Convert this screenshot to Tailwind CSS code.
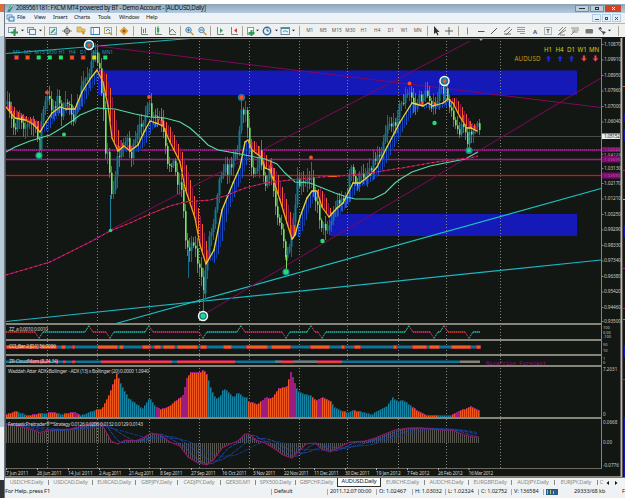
<!DOCTYPE html>
<html lang="en">
<head>
    <meta charset="UTF-8">
    <meta name="viewport" content="width=device-width, initial-scale=1.0">
    <title>FXCM MT4 - AUDUSD,Daily</title>
    <script src="https://cdn.jsdelivr.net/npm/@tailwindcss/browser@4"></script>
</head>
<body class="h-[502px] w-[625px] overflow-hidden bg-white pt-1 font-['Noto_Sans',sans-serif] text-[6px] leading-none text-[#222]">
    <div class="flex h-[494px]">
        <!-- edge of the docked panel on the left -->
        <aside class="flex w-[5px] shrink-0 flex-col border-r border-[#6d7883] bg-[#b9cbd9]">
            <div class="h-2 bg-[#e06a35]"></div>
            <div class="h-6 bg-[#eceff2]"></div>
            <div class="flex-1"></div>
            <div class="h-[53px] bg-[#eef1f4]"></div>
            <div class="h-[18px] bg-[#333]"></div>
        </aside>

        <div class="flex w-[620px] flex-col">
            <!-- title bar -->
            <header class="flex h-[9px] items-center bg-linear-to-b from-[#8fa6b2] to-[#b3cbe4] whitespace-nowrap">
                <svg class="ml-px h-2 w-2" viewBox="0 0 8 8"><path d="M1 7 L4 1 L7 2 L4 7Z" fill="#3e8e7c"/><path d="M3 4L6 1" stroke="#e8c23a"/></svg>
                <span class="ml-0.5 text-[6.2px] tracking-[-0.34px] text-[#111]">2089561181: FXCM MT4 powered by BT - Demo Account - [AUDUSD,Daily]</span>
                <div class="mr-1 ml-auto flex h-[7px] gap-px">
                    <i class="grid w-3.5 place-items-center border border-[#7c8c9c] bg-[#bccddc]"><b class="h-px w-1.5 bg-[#333]"></b></i>
                    <i class="grid w-3.5 place-items-center border border-[#7c8c9c] bg-[#bccddc]"><b class="h-[3px] w-1 border border-[#333]"></b></i>
                    <i class="grid w-4 place-items-center bg-[#cf4426]"><svg class="h-[5px] w-[5px]" viewBox="0 0 5 5"><path d="M1 1L4 4M4 1L1 4" stroke="#fff"/></svg></i>
                </div>
            </header>

            <!-- menu -->
            <nav class="flex h-2.5 items-center bg-[#edf2f6] text-[5.7px] tracking-[-0.25px] whitespace-nowrap">
                <svg class="ml-px h-2 w-[9px]" viewBox="0 0 9 8"><rect x="1" y="1" width="5" height="4" fill="#fff" stroke="#5c93c4"/><rect x="3" y="3" width="5" height="4" fill="#d6e8f5" stroke="#3e75a8"/></svg>
                <span class="ml-0.5 w-[17px]">File</span>
                <span class="w-[19px]">View</span>
                <span class="w-[21px]">Insert</span>
                <span class="w-[24px]">Charts</span>
                <span class="w-[21px]">Tools</span>
                <span class="w-[27px]">Window</span>
                <span>Help</span>
                <div class="mr-1 ml-auto flex h-2 gap-px text-center text-[6px] text-[#345]">
                    <i class="grid w-[9px] place-items-center border border-[#b4cce0] bg-[#e6eff7]"><b class="mt-0.5 h-px w-1 bg-[#456]"></b></i>
                    <i class="grid w-[9px] place-items-center border border-[#b4cce0] bg-[#e6eff7]"><b class="h-[3px] w-[3px] border border-[#456]"></b></i>
                    <i class="grid w-[9px] place-items-center border border-[#b4cce0] bg-[#e6eff7]"><svg class="h-[5px] w-[5px]" viewBox="0 0 5 5"><path d="M1 1L4 4M4 1L1 4" stroke="#456"/></svg></i>
                </div>
            </nav>

            <!-- toolbar, filled by the script -->
            <div id="toolbar" class="flex h-3.5 items-center border-t border-[#b9b6a8] bg-[#eff1f1] pl-px text-[#555]"></div>

            <!-- chart -->
            <svg id="chart" class="block h-[440px] w-[620px] bg-[#131713]" viewBox="5 37 620 440" font-family="Noto Sans, sans-serif"></svg>

            <!-- chart tabs -->
            <div class="flex h-2.5 items-center border-t border-[#777] bg-[#f0f3f4] text-center text-[5.6px] tracking-[-0.2px] whitespace-nowrap text-[#888]">
                <span class="w-[43px]">USDCHF,Daily</span>
                <span class="w-[44px] border-l border-[#888]">USDCAD,Daily</span>
                <span class="w-[43px] border-l border-[#888]">EURCAD,Daily</span>
                <span class="w-[42px] border-l border-[#888]">GBPJPY,Daily</span>
                <span class="w-[43px] border-l border-[#888]">CADJPY,Daily</span>
                <span class="w-[35px] border-l border-[#888]">GER30,M1</span>
                <span class="w-[40px] border-l border-[#888]">SPX500,Daily</span>
                <span class="w-[42px] border-l border-[#888]">GBPCHF,Daily</span>
                <span class="grid h-[9px] w-[44px] place-items-center border border-t-0 border-[#333] bg-white text-[#111]">AUDUSD,Daily</span>
                <span class="w-[43px]">EURCHF,Daily</span>
                <span class="w-[44px] border-l border-[#888]">AUDCHF,Daily</span>
                <span class="w-[43px] border-l border-[#888]">EURGBP,Daily</span>
                <span class="w-[43px] border-l border-[#888]">AUDJPY,Daily</span>
                <span class="w-[43px] border-l border-[#888]">EURJPY,Daily</span>
                <span class="w-[8px] border-l border-[#888]">C</span>
                <svg class="h-1.5 w-3.5" viewBox="0 0 14 6"><path d="M4 1V5L1.500 3ZM10 1V5L12.500 3Z" fill="#111"/></svg>
            </div>

            <!-- status bar -->
            <footer class="flex h-[11px] items-center bg-[#eef2f4] pb-px text-[5.6px] tracking-[-0.1px] whitespace-nowrap">
                <span class="w-[266px] text-[5.8px] tracking-[-0.2px]">For Help, press F1</span>
                <span class="w-[56px] border-l border-[#aaa] pl-0.5">Default</span>
                <span class="w-[49px] border-l border-[#aaa] pl-0.5 tracking-[-0.2px]">2011.12.07 00:00</span>
                <span class="w-[36px] border-l border-[#aaa] pl-0.5">O: 1.02467</span>
                <span class="w-[33px] border-l border-[#aaa] pl-0.5">H: 1.03032</span>
                <span class="w-[33px] border-l border-[#aaa] pl-0.5">L: 1.02324</span>
                <span class="w-[33px] border-l border-[#aaa] pl-0.5">C: 1.02752</span>
                <span class="w-[32px] border-l border-[#aaa] pl-0.5">V: 136584</span>
                <span class="flex w-[31px] items-center border-l border-[#aaa] pl-0.5"><svg class="h-1.5 w-3" viewBox="0 0 12 6"><rect width="12" height="6" fill="#2c5c86"/><path d="M1.500 1V5M4.500 1V5M7.500 2V5" stroke="#b8c860"/></svg></span>
                <span class="w-[48px]">29333/68 kb</span>
                <span>F</span>
            </footer>
        </div>
    </div>

    <script>
        // ---------- toolbar ----------
        const doc = '<rect x="2.500" y="1.500" width="6" height="7" fill="#fff" stroke="#8a98a4"/>';
        const axes = '<path d="M2.500 1V8.500H9" stroke="#7a8a7a" fill="none"/>';
        const lens = '<circle cx="4.500" cy="4" r="2.700" fill="#cfe6f6" stroke="#4787b4"/><path d="M6.500 6L9.500 9" stroke="#c09a3c" stroke-width="1.500"/>';
        const icons = {
            newchart: '<rect x=".5" y="1.500" width="7" height="5" fill="#e9f2f8" stroke="#7f98ab"/><path d="M6.500 3V10M3 6.500H10" stroke="#2f9a4a" stroke-width="2.200"/>',
            profiles: '<rect x="1.500" y="1.500" width="6" height="5" fill="#dceaf5" stroke="#7f98ab"/><rect x="3.500" y="3.500" width="6" height="5" fill="#eef5fa" stroke="#6a8196"/>',
            market: '<rect x="1.500" y="1.500" width="7" height="7" fill="#e4f0f8" stroke="#6fa4c8"/><path d="M3 7L7 3" stroke="#2f9a4a" stroke-width="1.500"/><path d="M6 7H8" stroke="#d98c24"/>',
            target: '<circle cx="5" cy="5" r="2.500" fill="none" stroke="#555"/><path d="M5 0V10M0 5H10" stroke="#555" stroke-width=".7"/>',
            folder: '<path d="M1 1H5L6 3H9V6H1Z" fill="#e9c264" stroke="#b98d2d" stroke-width=".6"/><path d="M5 4L9 7L7 9Z" fill="#dc8f1f"/>',
            terminal: '<rect x="1" y="1.500" width="8.500" height="7" fill="#f4fafd" stroke="#3f7fb0"/><path d="M3.500 2V8" stroke="#7fb0d2"/>',
            tester: '<rect x="1.500" y="1.500" width="7" height="6" fill="#e8f0f5" stroke="#c2a658"/><path d="M3 5L5 3L7 5" stroke="#4787b4" fill="none"/><path d="M6 6L9 9" stroke="#c09a3c" stroke-width="1.500"/>',
            order: '<path d="M5 .5L9.500 5L5 9.500L.5 5Z" fill="#e6a23c"/><circle cx="5" cy="5" r="1.500" fill="#8d5b20"/>',
            bars: axes + '<path d="M4.500 3V7M6.500 2V7" stroke="#4c9c6a"/>',
            candles: axes + '<path d="M5 0V8" stroke="#3f9f62"/><rect x="4" y="2" width="2.200" height="4" fill="#3f9f62"/>',
            line: axes + '<path d="M3 6L5 3L9 7" stroke="#4c9c6a" fill="none"/>',
            zoomin: lens + '<path d="M3 4H6M4.500 2.500V5.500" stroke="#245d88" stroke-width=".8"/>',
            zoomout: lens + '<path d="M3 4H6" stroke="#245d88" stroke-width=".8"/>',
            scroll: axes + '<path d="M5 2L8 4.500L5 7Z" fill="#3f9f62"/>',
            shift: axes + '<path d="M8 2L5 4.500L8 7Z" fill="#c84040"/>',
            indic: doc + '<path d="M6.500 4V10M3.500 7H9.500" stroke="#26a24b" stroke-width="2"/>',
            clock: '<circle cx="5" cy="5" r="3.700" fill="#eaf4fb" stroke="#2e6da4" stroke-width="1.400"/><path d="M5 2.500V5H7" stroke="#333" fill="none" stroke-width=".8"/>',
            template: '<rect x="1" y="1.500" width="8.500" height="7" fill="#eef5f9" stroke="#6b8ba2"/><path d="M1 2.500H9.500" stroke="#4787b4"/><path d="M3 6L5 4.500L8 6" stroke="#57a063" fill="none"/>',
            cursor: '<path d="M3 0V8L5 6.500L6.500 9.500L7.500 9L6.200 6H8.500Z" fill="#333"/>',
            cross: '<path d="M5 1V9M1 5H9" stroke="#555" stroke-width=".9"/>',
            vline: '<path d="M5.500 1.500V8.500" stroke="#a08b4c"/>',
            hline: '<path d="M2 5.500H8.500" stroke="#555"/>',
            trend: '<path d="M2 8L8 2" stroke="#555"/>',
            channel: '<path d="M1 6L7 1M3 9L9 3M1 8H8" stroke="#666" stroke-width=".9"/>',
            fibo: '<path d="M1 1.500H9M1 3.500H9M1 5.500H9M4 7.500H9" stroke="#8a8560" stroke-width=".8"/>',
            gann: '<path d="M1 9L9 1M1 9L9 4M2 5L6 1M3 9H8" stroke="#777" stroke-width=".9"/>',
            fan: '<path d="M1 2H9M2 4H9M2 6H8M1 9L5 5" stroke="#7c7a62" stroke-width=".8"/>',
            rect: '<rect x="1.500" y="3" width="7.500" height="4.500" rx="1" fill="#777"/>',
            text: '<text x="5" y="7.500" font-size="6" font-weight="bold" text-anchor="middle" fill="#555">A</text>',
            label: '<rect x="1.500" y="1.500" width="7" height="7" fill="none" stroke="#777" stroke-dasharray="1"/><text x="5" y="7.300" font-size="6" font-weight="bold" text-anchor="middle" fill="#555">T</text>',
            arrows: '<path d="M1 2L4 1L5 4ZM5 5L9 6L6 9Z" fill="#444"/><path d="M2 3L7 8" stroke="#666"/>'
        };
        // [what, cell width]; "|" is a separator, "v" a drop-down arrow
        const tools = [
            ['newchart', 14], ['v', 4], ['profiles', 14], ['v', 4], ['|', 4], ['market', 14], ['target', 14], ['folder', 14],
            ['terminal', 13], ['tester', 13], ['|', 4], ['order', 12], ['|', 7], ['bars', 14], ['candles', 14], ['line', 13], ['|', 4],
            ['zoomin', 13], ['zoomout', 13], ['|', 5], ['scroll', 14], ['shift', 13], ['|', 4], ['indic', 11], ['v', 5],
            ['clock', 14], ['v', 4], ['template', 13], ['v', 4], ['|', 8],
            ['M1', 13.5], ['M5', 13.5], ['M15', 13.5], ['M30', 13.5], ['H1', 13.5], ['H4', 13.5], ['D1', 13.5], ['W1', 13.5], ['MN', 13.5],
            ['|', 5], ['cursor', 13], ['cross', 13], ['|', 5], ['vline', 13.5], ['hline', 13.5], ['trend', 13.5], ['channel', 13.5],
            ['fibo', 13.5], ['text', 13.5], ['label', 13.5], ['gann', 13.5], ['fan', 13.5], ['rect', 13.5], ['arrows', 12], ['v', 4], ['|', 13]
        ];
        document.getElementById('toolbar').innerHTML = tools.map(([t, w]) => {
            let inner = `<span class="text-[4.8px]">${t}</span>`;
            if (t === '|') inner = '<i class="h-2.5 w-px bg-[#a9a794]"></i>';
            else if (t === 'v') inner = '<svg class="h-[3px] w-[3px]" viewBox="0 0 4 4"><path d="M0 1H4L2 3Z" fill="#111"/></svg>';
            else if (icons[t]) inner = `<svg class="h-2.5 w-2.5" viewBox="0 0 10 10">${icons[t]}</svg>`;
            return `<div class="grid h-full shrink-0 place-items-center" style="width:${w}px">${inner}</div>`;
        }).join('');

        // ---------- chart ----------
        let out = '';
        const line = (x1, y1, x2, y2, c, extra = '') => out += `<line x1="${x1}" y1="${y1}" x2="${x2}" y2="${y2}" stroke="${c}" ${extra}/>`;
        const rect = (x, y, w, h, c) => out += `<rect x="${x}" y="${y}" width="${w}" height="${h}" fill="${c}"/>`;
        const poly = (pts, c, extra = '') => out += `<polyline points="${pts.join(' ')}" fill="none" stroke="${c}" ${extra}/>`;
        const text = (x, y, s, c = '#c8c8c8', size = 5, extra = '') => out += `<text x="${x}" y="${y}" fill="${c}" font-size="${size}" ${extra}>${s}</text>`;
        const crisp = 'shape-rendering="crispEdges"';

        // "x,y x,y ..." -> [[x, y], ...]
        const parse = s => s.trim().split(/\s+/).map(p => p.split(',').map(Number));
        const at = (pts, x) => {
            if (x <= pts[0][0]) return pts[0][1];
            for (let i = 1; i < pts.length; i++) {
                const [a, ya] = pts[i - 1], [b, yb] = pts[i];
                if (x <= b) return ya + (yb - ya) * (x - a) / (b - a);
            }
            return pts[pts.length - 1][1];
        };
        let seed = 7;
        const rnd = () => (seed = (seed * 16807) % 2147483647) / 2147483647;

        // zones
        rect(98, 70, 479, 25, '#1419b8');
        rect(330, 214, 247, 22, '#1419b8');
        line(98, 70.5, 577, 70.5, '#0a0c60', 'stroke-dasharray="1 1"');

        // period separators
        [47.5, 97.5, 149.5, 199.5, 249.5, 299.5, 347.5, 398.5, 446.5, 500.5].forEach(x =>
            line(x, 38, x, 468, '#85857c', 'stroke-dasharray="1 2"'));

        // price levels
        line(6, 136.5, 601, 136.5, '#4a4c4a');
        line(6, 150, 601, 150, '#7c0c6c', 'stroke-width="2"');
        line(6, 150, 601, 150, '#b02a98', 'stroke-width="1" stroke-dasharray="1 1"');
        line(6, 159.5, 601, 159.5, '#a01c88', 'stroke-width="1.300"');
        line(6, 175.5, 601, 175.5, '#481414', 'stroke-width="2"');
        line(6, 175.5, 601, 175.5, '#9a2070');

        // trend lines
        line(6, 53.5, 190, 38.5, '#1cb4b4', 'stroke-width="1.200"');
        line(6, 321.5, 601, 260, '#1cb4c0', 'stroke-width="1.200"');
        line(116, 323.5, 601, 188.5, '#1cc0c0', 'stroke-width="1.200"');
        line(89, 45, 601, 107.5, '#80085c');
        line(110, 230, 470, 41, '#80085c');
        line(203, 315, 601, 78, '#80085c');

        // candles
        const price = parse(`6,104 10,118 14,130 18,112 24,126 33,125 39,145 42,112 47,98 52,108 57,99 62,115 68,100 74,120 78,104
            82,84 88,74 90,62 94,56 98,62 100,84 103,105 104,145 108,158 110,190 114,188 116,160 122,150 126,132 130,158 136,140
            142,118 149,108 152,120 160,118 164,142 167,168 172,158 176,178 182,188 184,238 188,248 193,240 198,266 203,292
            208,240 212,228 217,190 222,166 228,172 234,152 238,146 241,108 246,112 250,160 254,172 260,152 264,188 270,170
            275,205 282,230 285,262 289,245 292,238 297,184 304,186 311,174 316,205 322,228 330,224 334,210 340,196 346,203
            350,168 355,184 362,176 370,166 380,150 388,120 393,128 397,112 404,98 409,94 415,105 422,96 428,94 434,112
            438,94 444,90 448,100 453,114 457,133 462,122 467,145 472,126 477,128 480,138`);
        let prev = at(price, 6);
        for (let x = 7; x < 481; x += 2) {
            const close = at(price, x) + (rnd() - .5) * 12;
            const up = close < prev;
            const top = Math.min(prev, close), bottom = Math.max(prev, close);
            line(x + .5, top - 2 - rnd() * 9, x + .5, bottom + 2 + rnd() * 9, up ? '#116a88' : '#1c8f86', crisp);
            rect(x - (up ? .5 : 0), top, up ? 2 : 1.6, Math.max(bottom - top, 1), up ? '#107a9a' : '#74ec62');
            prev = close;
        }
        // long wicks
        [[110, 195, 230, '#1c7f9c'], [203, 290, 312, '#1c7f9c'], [241, 100, 130, '#107a9a'], [149, 100, 112, '#107a9a'], [286, 255, 270, '#7ce060'],
         [311, 162, 180, '#107a9a'], [39, 140, 154, '#107a9a'], [188, 250, 278, '#116a88'], [444, 84, 100, '#107a9a'], [469, 132, 150, '#1c9f86']]
            .forEach(([x, a, b, c]) => line(x + .5, a, x + .5, b, c));

        // ribbon between the fast average and its own lagged value
        const fast = parse(`6,107 15,118 25,120 33,124 40,132 46,122 52,113 60,107 66,109 75,109 82,92 90,79 97,70 103,82 108,106 112,138
            118,151 124,146 130,151 138,145 144,132 150,121 156,123 163,126 170,142 180,162 185,188 195,218 200,245 206,264
            214,250 222,210 233,183 240,167 245,142 248,140 252,150 262,158 265,168 270,170 280,200 287,223 292,239 295,235
            300,217 307,198 312,191 317,191 322,207 329,217 337,208 343,203 353,183 360,183 370,175 377,167 387,147 400,122
            412,103 423,106 428,103 433,106 443,103 448,99 453,103 460,117 467,128 471,128 477,131`);
        for (let x = 8; x < 478; x += 2) {
            const f = at(fast, x), s = (at(fast, x - 3) + at(fast, x - 8)) / 2;
            const odd = (x / 2) % 2;
            if (s < f - 1) line(x + .5, s - 3, x + .5, f, odd ? '#f0601c' : '#8c1260', crisp);
            else if (s > f + 1) line(x + .5, f, x + .5, s + 3, odd ? '#1c4cc4' : '#12348c', crisp);
            else line(x + .5, f - 1, x + .5, f + 4, '#143c98', crisp);
        }
        for (let i = 1; i < fast.length; i++) {
            const [a, b] = [fast[i - 1], fast[i]];
            line(a[0], a[1], b[0], b[1], b[1] > a[1] + 3 ? '#f0a81c' : '#e8d838', 'stroke-width="1.300" stroke-linecap="round"');
        }

        // slow averages
        poly(parse(`6,152 15,147 30,141 50,135 60,129 72,121 80,115 97,108 115,109 135,114 150,117 165,118 180,122 190,128 200,137 208,145
            218,150 235,153 255,157 265,159 277,164 285,173 295,182 310,183 320,187 335,193 347,197 355,199 373,199 385,193
            395,183 402,178 412,172 430,166 450,162 465,159 478,152`), '#58d8a8', 'stroke-width="1.100"');
        const slow = parse(`6,275 30,268 50,262 70,252 90,242 110,231 130,223 150,214 170,206 185,202 210,200 225,196 245,188 265,183
            290,180 320,177 340,176 370,173 395,169 402,168 430,163 450,160 470,158 478,156`);
        poly(slow, '#a00c70', 'stroke-width="1.200"');
        poly(slow, '#e04030', 'stroke-width="1" stroke-dasharray="2 3"');
        line(329, 176.5, 337, 176.5, '#f0601c');

        // swing markers
        const dot = (x, y, r, c) => out += `<circle cx="${x}" cy="${y}" r="${r}" fill="${c}"/>`;
        const ring = (x, y) => out += `<circle cx="${x}" cy="${y}" r="4.500" fill="#187c94" stroke="#fff" stroke-width="1.400"/>`;
        [[39, 155.5], [286, 272], [469, 150.5]].forEach(([x, y]) => dot(x, y, 3.6, '#1a8890'));
        dot(241.5, 97.5, 3.6, '#2078a0');
        [[89, 45], [444.5, 81], [203, 316]].forEach(([x, y]) => ring(x, y));
        [[39, 155.5, 2.4], [64, 134.5, 2], [110.5, 230.500, 1.8], [286, 272, 2.4], [322.5, 241, 2.2], [434.5, 123, 2.2], [469, 150.5, 2], [203, 316, 2.4]]
            .forEach(([x, y, r]) => dot(x, y, r, '#20e070'));
        [[47, 92.5], [149, 97], [241.5, 97.5], [409.5, 83.5], [311, 157.500], [444.5, 81], [89, 45]]
            .forEach(([x, y]) => dot(x, y, 1.9, '#f0502a'));

        // timeframe signals, top left
        [['M1', 13], ['M5', 24], ['M15', 34.5], ['M30', 46.5], ['H1', 58.5], ['H4', 69], ['D1', 80], ['W1', 91], ['MN1', 102]]
            .forEach(([s, x]) => text(x, 53.5, s, '#1c9cb4', 5));
        ['#f0581c', '#f0581c', '#24e070', '#24e070', '#24e070', '#f0581c', '#f0581c', '#d8e020', '#24e070'].forEach((c, i) => {
            const x = 14.5 + i * 11.1;
            rect(x, 55.5, 4, 4, c);
            if (c === '#f0581c') out += `<rect x="${x}" y="55.500" width="4" height="4" fill="none" stroke="#a01870" stroke-width=".6"/>`;
        });

        // timeframe arrows, top right
        [['H1', 544], ['H4', 555.5], ['D1', 567], ['W1', 577.5], ['MN', 589]].forEach(([s, x]) => text(x, 52.2, s, '#d8c820', 6.2));
        text(514.5, 61, 'AUDUSD', '#c09a1c', 6.2, 'textLength="26"');
        [548.5, 560, 571.5].forEach(x => out += `<path d="M${x} 55.500L${x + 2.7} 58.500H${x + 1}V61.500H${x - 1}V58.500H${x - 2.7}Z" fill="#2028d8"/>`);
        [584, 595.5].forEach(x => out += `<path d="M${x} 61.500L${x + 2.7} 58.500H${x + 1}V55.500H${x - 1}V58.500H${x - 2.7}Z" fill="#f0581c" stroke="#a01860" stroke-width=".5"/>`);
        out += '<path d="M478.500 38H483.500L481 41Z" fill="#aaa"/>';

        // sub window 1: impulse line
        const spikes = parse('39,1 89,-1 110,1 149,-1 203,1 241,-1 286,1 311,-1 322,1 409,-1 434,1 444,-1 469,1');
        let x0 = 6;
        spikes.concat([[484, 0]]).forEach(([x, dir], i) => {
            const red = i === 0 || spikes[i - 1][1] < 0;
            line(x0, 332, x - 4, 332, red ? '#8c1450' : '#12707c', 'stroke-width="1.600"');
            line(x0, 332, x - 4, 332, red ? '#f0501c' : '#30c0a0', 'stroke-dasharray="1 1"');
            if (dir) {
                poly([[x - 4, 332], [x - 1.5, 332 + dir * 4], [x, 332 + dir * 6.5]], dir > 0 ? '#c03070' : '#28c888', 'stroke-dasharray="2 .7"');
                poly([[x, 332 + dir * 6.5], [x + 2, 332 + dir * 3], [x + 4, 332]], dir > 0 ? '#28b890' : '#d03870', 'stroke-dasharray="2 .7"');
            }
            x0 = x + 4;
        });

        // sub windows 2 and 3: colour bands; [from, to] are the orange runs
        rect(6, 345.5, 474, 3, '#10749a');
        [[6, 38], [40, 57], [61, 66], [72, 75], [97, 118], [119, 124], [142, 151], [154, 161], [163, 175], [177, 198], [200, 207], [223, 232],
         [246, 268], [271, 291], [310, 330], [341, 345], [354, 361], [393, 397], [412, 427], [429, 440], [451, 471], [476, 481]].forEach(([a, b]) => {
            rect(a, 345, b - a, 4, '#8c1a50');
            rect(a + .5, 345.7, b - a - 1, 2.8, '#f0601c');
        });
        rect(6, 360.5, 454, 2.5, '#10749a');
        rect(275, 360.5, 42, 2.5, '#777');
        rect(460, 360.5, 20, 2.5, '#8a8078');
        [[30, 50], [55, 58], [63, 66], [72, 75], [101, 172], [177, 235], [282, 294], [317, 342]].forEach(([a, b]) => {
            rect(a, 360, b - a, 3.5, '#a0144c');
            rect(a, 361, b - a, 1.7, '#f0501c');
        });

        // sub window 4: Waddah Attar histogram
        const adx = parse(`6,414 15,411 27,415 40,413 53,412 60,414 73,412 80,415 97,409 101,409 108,395 116,373 120,383 128,398 142,408
            149,398 155,406 160,409 167,407 173,402 182,395 186,378 190,372 200,372 203,369 207,375 209,385 215,398 219,397
            223,388 228,392 233,397 237,392 242,396 246,397 248,401 257,404 265,397 271,398 278,388 286,386 290,372 293,380
            297,390 305,394 310,395 315,400 323,397 330,401 335,408 343,411 347,412 353,410 363,412 372,414 377,410 385,407
            392,397 397,401 401,400 403,400 410,405 415,409 425,415 440,415 451,415 458,411 470,406 475,408 479,411`);
        const falling = [[17, 25], [42, 48], [58, 63], [79, 96], [120, 155], [208, 247], [295, 312], [331, 342], [346, 354], [360, 412], [437, 452]];
        const solid = [[73, 78], [155, 159], [182, 187], [262, 268], [289, 295], [317, 321], [455, 459]];
        const inside = (list, x) => list.some(([a, b]) => x >= a && x < b);
        for (let x = 6; x < 480; x += 2) {
            const y = Math.round(at(adx, x));
            const teal = inside(falling, x);
            rect(x, y, 2, 417 - y, teal ? '#134a58' : '#9c1c80');
            if (!inside(solid, x)) rect(x, y + 1, 1, 416 - y, teal ? '#1584a4' : '#f0581c');
        }

        // sub window 5: MACD-like strategy
        const macd = parse(`6,424 18,426 30,429 41,433 47,430 70,429 85,425 97,422 104,428 111,441 118,444 125,440 135,441 143,438 151,433
            160,435 170,442 180,446 188,457 198,463 207,465 214,459 222,448 230,444 238,441 245,434 249,434 256,440 265,443
            275,449 283,455 292,458 300,450 306,444 315,443 322,449 330,452 340,447 350,442 365,441 375,438 385,434 395,430
            408,428 420,428 440,430 452,430 462,434 472,437 479,437`);
        for (let x = 6; x < 480; x += 2) line(x + .5, 442.5, x + .5, at(macd, x), '#56564e', crisp);
        [[8, '#2050b8'], [20, '#1c48b0'], [34, '#143c98']].forEach(([lag, c]) => {
            const pts = [];
            for (let x = 6; x < 480; x += 3) {
                let sum = 0;
                for (let k = 0; k <= 8; k++) sum += at(macd, x - lag * k / 6);
                pts.push([x, (sum / 9).toFixed(1)]);
            }
            poly(pts, c, 'stroke-width=".9" stroke-dasharray="4 1"');
        });
        poly(macd, '#981468', 'stroke-width="1.100"');

        // window frames
        line(6, 38.5, 601, 38.5, '#888', crisp);
        [324, 340, 355, 366, 418].forEach(y => rect(6, y - 1, 596, 2, '#85857c'));
        rect(6, 468, 596, 1, '#6c6a60');
        rect(601, 38, 1, 430, '#85857c');
        rect(5, 37, 1, 440, '#55504c');
        rect(5, 476, 617, 1, '#85857c');

        // captions
        text(9, 331, 'ZZ_a 0.0010 0.0010', '#d4d4d4', 4.9, 'textLength="39"');
        text(9, 347.5, 'CCI_Bar 2 [D1] 56.0096', '#d4d4d4', 4.9, 'textLength="47"');
        text(9, 362.5, 'ZR-CloudMom (8,24,34)', '#d4d4d4', 4.9, 'textLength="49"');
        text(8, 373, 'Waddah Attar ADXxBollinger - ADX (13) x Bollinger (20) 0.0000 1.0940', '#d4d4d4', 4.9, 'textLength="141"');
        text(8, 425.5, 'FantasticPreitrader®™Strategy  0.0126 0.0206 0.0132 0.0129 0.0143', '#d4d4d4', 4.9, 'textLength="135"');
        text(486, 365.3, 'NinaPrice Forecast', '#8c1274', 5.6, 'textLength="60" font-family="Liberation Mono"');

        // price scale
        const scale = [[44, '1.10870'], [59.5, '1.09910'], [75, '1.08950'], [90.5, '1.07960'], [106, '1.07000'], [121.5, '1.06040'],
            [153.7, '1.04120'], [168, '1.03130'], [183, '1.02170'], [198.5, '1.01210'], [214, '1.00250'], [229.5, '0.99290'], [245, '0.98330'],
            [260.5, '0.97340'], [276, '0.96380'], [291.5, '0.95420'], [307, '0.94460'], [321, '0.93500']];
        rect(602, 147, 18, 5, '#7c0c6c');
        rect(602, 156, 18, 6.5, '#7c0c6c');
        rect(602, 172.5, 18, 6, '#7c0c6c');
        rect(602, 133.5, 18, 5.5, '#f0f0f0');
        scale.forEach(([y, s]) => {
            text(604, y + 1.8, s, '#c8c8c0', s === '1.04120' ? 4 : 4.8, 'textLength="17"');
            rect(602, y, 1.5, 1, '#85857c');
        });
        text(604, 138, '1.05152', '#222', 4.8, 'textLength="16"');
        [[149, '1.04340'], [159.2, '1.03695'], [175.2, '1.02690']].forEach(([y, s]) => text(604, y + 1.5, s, '#c850b0', 4, 'textLength="16"'));
        [[327.700, '100'], [332.200, '0.00'], [336.700, '-100'], [344, '50'], [350.800, '10'], [358.200, '1'], [362.800, '0']]
            .forEach(([y, s]) => text(603, y + 1.5, s, '#c8c8c0', 3.9));
        [[369.500, '7.2031'], [414, '0'], [422, '0.0668'], [442, '0.00'], [465.500, '-0.0776']].forEach(([y, s]) => text(603, y + 1.8, s, '#c8c8c0', 4.6));

        // dates
        [[6, '7 Jun 2011'], [37, '26 Jun 2011'], [68, '14 Jul 2011'], [99, '2 Aug 2011'], [129, '21 Aug 2011'], [160, '8 Sep 2011'],
         [191, '27 Sep 2011'], [222, '16 Oct 2011'], [253, '3 Nov 2011'], [284, '22 Nov 2011'], [314, '11 Dec 2011'], [345, '30 Dec 2011'],
         [376, '19 Jan 2012'], [407, '7 Feb 2012'], [438, '26 Feb 2012'], [468.5, '16 Mar 2012']].forEach(([x, s]) => {
            text(x, 475.2, s, '#d0d0d0', 4.8, `textLength="${s.length * 2.25}"`);
            rect(x, 468, 1, 2, '#aaa');
        });

        // right window edge and the neighbouring chart
        rect(620.5, 38, 2, 440, '#b8b8b4');
        rect(622, 37, 1, 440, '#55504c');
        [[113, 8], [129, 12], [225, 12], [345, 12], [417, 60]].forEach(([y, h]) => rect(624, y, 1, h, '#1419b8'));
        [[86, '#f0601c'], [170, '#a01c88'], [199, '#c8c840'], [268, '#a01c88'], [308, '#a01c88'], [319, '#f0601c'], [379, '#a01c88']].forEach(([y, c]) => rect(623, y, 2, 1, c));

        document.getElementById('chart').innerHTML = out;
    </script>
</body>
</html>
